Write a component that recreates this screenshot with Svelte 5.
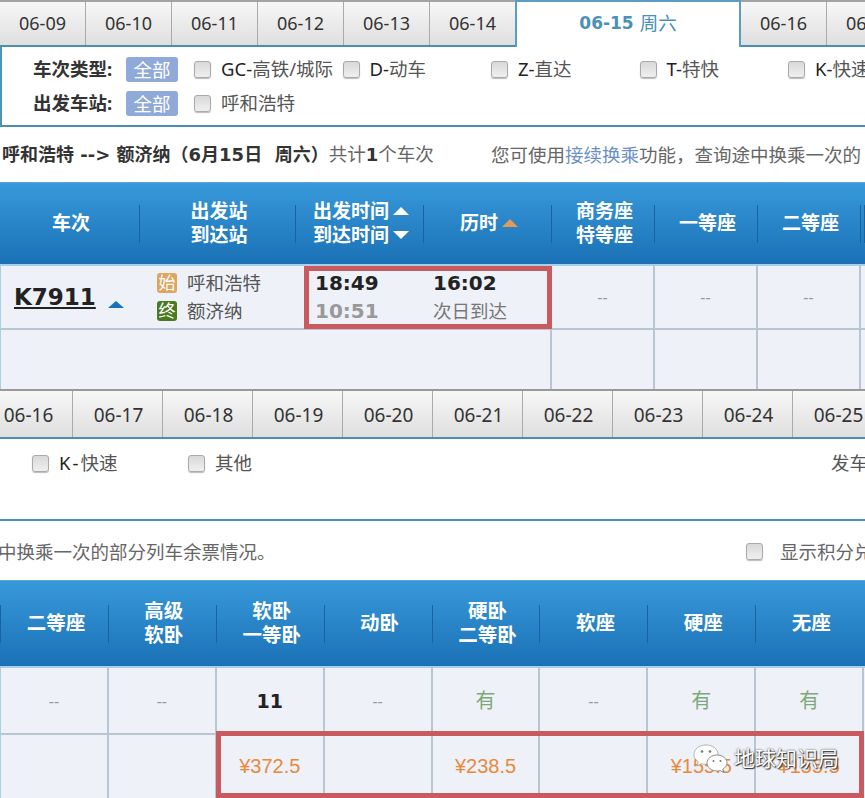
<script>
  const topDates = ["06-09", "06-10", "06-11", "06-12", "06-13", "06-14"];
  const topDatesAfter = ["06-16", "06-17"];
  const bottomDates = ["06-16", "06-17", "06-18", "06-19", "06-20", "06-21", "06-22", "06-23", "06-24", "06-25"];
  const trainTypes = [
    { code: "GC-", name: "高铁/城际" },
    { code: "D-", name: "动车" },
    { code: "Z-", name: "直达" },
    { code: "T-", name: "特快" },
    { code: "K-", name: "快速" },
  ];
  const topSeats = [["商务座", "特等座"], ["一等座"], ["二等座"]];
  const bottomSeats = [
    ["二等座"], ["高级", "软卧"], ["软卧", "一等卧"], ["动卧"],
    ["硬卧", "二等卧"], ["软座"], ["硬座"], ["无座"],
  ];
  const availability = ["--", "--", "11", "--", "有", "--", "有", "有"];
  const prices = ["", "", "¥372.5", "", "¥238.5", "", "¥155.5", "¥155.5"];
</script>

<div class="page">
  <!-- left half of the results page -->
  <section class="panel top">
    <div class="tabs">
      {#each topDates as d}
        <div class="tab">{d}</div>
      {/each}
      <div class="tab active"><b>06-15</b> 周六</div>
      {#each topDatesAfter as d}
        <div class="tab">{d}</div>
      {/each}
    </div>

    <div class="filter">
      <div class="filter-row">
        <span class="label">车次类型:</span>
        <span class="all">全部</span>
        <div class="types">
          {#each trainTypes as t}
            <span class="check"><i class="box"></i><span class="latin">{t.code}</span>{t.name}</span>
          {/each}
        </div>
      </div>
      <div class="filter-row">
        <span class="label">出发车站:</span>
        <span class="all">全部</span>
        <div class="types">
          <span class="check"><i class="box"></i>呼和浩特</span>
        </div>
      </div>
    </div>

    <div class="summary">
      <span class="route"><b>呼和浩特 --&gt; 额济纳（6月15日&nbsp; 周六）</b>共计<b>1</b>个车次</span>
      <span class="hint">您可使用<span class="link">接续换乘</span>功能，查询途中换乘一次的</span>
    </div>

    <div class="thead top-cols">
      <div class="th">车次</div>
      <div class="th">出发站<br />到达站</div>
      <div class="th">
        <div class="sorted"><span>出发时间</span><i class="tri up"></i></div>
        <div class="sorted"><span>到达时间</span><i class="tri down"></i></div>
      </div>
      <div class="th"><div class="sorted"><span>历时</span><i class="tri up orange"></i></div></div>
      {#each topSeats as s}
        <div class="th">{#each s as line, i}{#if i}<br />{/if}{line}{/each}</div>
      {/each}
      <div class="th"></div>
    </div>

    <div class="tbody top-body">
      <div class="train-info">
        <div class="train"><a href="#k7911">K7911</a><i class="tri small"></i></div>
        <div class="stations">
          <div class="station"><i class="badge start">始</i>呼和浩特</div>
          <div class="station"><i class="badge end">终</i>额济纳</div>
        </div>
        <div class="times">
          <b>18:49</b>
          <b class="arrive">10:51</b>
        </div>
        <div class="times">
          <b>16:02</b>
          <span class="next-day">次日到达</span>
        </div>
      </div>
      <div class="td dash">--</div>
      <div class="td dash">--</div>
      <div class="td dash">--</div>
      <div class="td last"></div>
      <div class="td spacer"></div>
      <div class="td"></div>
      <div class="td"></div>
      <div class="td"></div>
      <div class="td last"></div>
    </div>

    <div class="highlight time-box"></div>
  </section>

  <!-- right half, scrolled sideways -->
  <section class="panel bottom">
    <div class="tabs shifted">
      {#each bottomDates as d}
        <div class="tab wide">{d}</div>
      {/each}
    </div>

    <div class="filter plain">
      <span class="check k"><i class="box"></i><span class="latin">K-</span>快速</span>
      <span class="check other"><i class="box"></i>其他</span>
      <span class="depart">发车</span>
    </div>

    <div class="summary tail">
      <span class="tail-text">中换乘一次的部分列车余票情况。</span>
      <span class="check points"><i class="box"></i>显示积分兑换</span>
    </div>

    <div class="thead bottom-cols">
      {#each bottomSeats as s}
        <div class="th">{#each s as line, i}{#if i}<br />{/if}{line}{/each}</div>
      {/each}
    </div>

    <div class="tbody bottom-cols">
      {#each availability as a}
        <div class="td avail" class:dash={a === "--"} class:count={a === "11"} class:yes={a === "有"}>{a}</div>
      {/each}
      {#each prices as p}
        <div class="td price">{p}</div>
      {/each}
    </div>

    <div class="highlight price-box"></div>

    <div class="watermark">
      <svg viewBox="0 0 38 30" width="38" height="30" aria-hidden="true">
        <path d="M14 2C7 2 2 6.300 2 11.500c0 3 1.700 5.600 4.300 7.300L5.200 23l4.400-2.300c1.400.4 2.800.6 4.400.6 6.800 0 12-4.300 12-9.800S20.800 2 14 2z" fill="#fff" stroke="#888" stroke-width=".6" />
        <path d="M25 12c-5.500 0-10 3.500-10 8s4.500 8 10 8c1.100 0 2.200-.2 3.200-.5l3.400 1.900-.9-3.200c2.600-1.500 4.300-3.700 4.300-6.200 0-4.500-4.500-8-10-8z" fill="#fff" stroke="#777" stroke-width=".8" />
        <circle cx="10" cy="8.500" r="1.300" fill="#777" />
        <circle cx="18" cy="8.500" r="1.300" fill="#777" />
        <circle cx="21.500" cy="18" r="1" fill="#777" />
        <circle cx="28.500" cy="18" r="1" fill="#777" />
      </svg>
      <span>地球知识局</span>
    </div>
  </section>
</div>

<style>
  .page {
    width: 865px;
    height: 798px;
    overflow: hidden;
    background: #fff;
    font-family: "Noto Sans", "Noto Sans CJK SC", sans-serif;
    font-size: 18.500px;
    line-height: 24px;
    color: #555;
  }

  .panel {
    position: relative;
    overflow: hidden;
  }

  .top {
    height: 391px;
    border-bottom: 2px solid #999;
    box-sizing: border-box;
  }

  .bottom {
    height: 407px;
  }

  /* date tabs */
  .tabs {
    display: flex;
    height: 47px;
    width: 1100px;
    box-sizing: border-box;
    border-top: 2px solid #a3a3a3;
    border-bottom: 2px solid #4a8fb0;
  }

  .bottom .tabs {
    border-top: 0;
    height: 48px;
  }

  .tabs.shifted {
    margin-left: -17px;
  }

  .tab {
    flex: 0 0 86px;
    display: flex;
    align-items: center;
    justify-content: center;
    box-sizing: border-box;
    padding-bottom: 2px;
    border-right: 1px solid #aaa;
    background: linear-gradient(#f7f7f7, #dfdfdf);
    color: #333;
    font-size: 18px;
  }

  .tab.wide {
    flex-basis: 90px;
    padding: 2px 0 0 2px;
    font-size: 19px;
  }

  .tab.active {
    flex-basis: 226px;
    height: 47px;
    margin: -2px 0 0 -1px;
    padding-bottom: 4px;
    gap: 6px;
    background: #fff;
    color: #4a90b8;
    border: 2px solid #5a9cc4;
    border-bottom: 0;
    position: relative;
    z-index: 1;
    font-size: 18.500px;
  }

  .tab.active b {
    font-family: "DejaVu Sans", sans-serif;
    font-size: 17px;
  }

  /* filter box */
  .filter {
    height: 80px;
    box-sizing: border-box;
    padding: 9px 0 0 31px;
    border-left: 2px solid #4a94b4;
    border-bottom: 2px solid #4a8fb0;
    display: flex;
    flex-direction: column;
    gap: 8px;
  }

  .filter-row {
    display: flex;
    align-items: center;
    height: 26px;
  }

  .label {
    flex: none;
    width: 93px;
    font-weight: 700;
    color: #333;
    white-space: nowrap;
  }

  .all {
    flex: none;
    width: 52px;
    height: 25px;
    line-height: 25px;
    text-align: center;
    border-radius: 3px;
    background: #8fa9d8;
    color: #fff;
    margin-right: 16px;
  }

  .types {
    display: flex;
  }

  .check {
    display: inline-flex;
    align-items: center;
    white-space: nowrap;
  }

  .types .check {
    width: 148.500px;
  }

  .latin {
    color: #222;
  }

  .box {
    flex: none;
    width: 15px;
    height: 15px;
    margin-right: 10px;
    border: 1px solid #aaa;
    border-radius: 3px;
    background: linear-gradient(#d9d9d9, #efefef);
    box-shadow: 0 1px 1px #bbb;
  }

  .filter.plain {
    position: relative;
    display: block;
    border-left: 0;
    height: 82px;
    padding: 0;
  }

  .filter.plain > * {
    position: absolute;
    top: 12px;
  }

  .k {
    left: 32px;
  }

  .k .latin {
    letter-spacing: 2px;
  }

  .other {
    left: 188px;
  }

  .depart {
    left: 831px;
    white-space: nowrap;
  }

  /* summary line */
  .summary {
    height: 55px;
    display: flex;
    align-items: center;
    white-space: nowrap;
    color: #666;
  }

  .route {
    flex: none;
    width: 491px;
    padding-left: 2px;
    box-sizing: border-box;
  }

  .route b {
    font-family: "DejaVu Sans", "Noto Sans CJK SC", sans-serif;
    font-size: 18px;
    color: #333;
  }

  .link {
    color: #6c8fc8;
  }

  .summary.tail {
    height: 59px;
    padding-top: 2px;
    box-sizing: border-box;
  }

  .tail-text {
    width: 748px;
    margin-left: -2px;
    flex: none;
  }

  .points .box {
    margin-right: 17px;
  }

  /* tables */
  .thead {
    display: grid;
    height: 82px;
    align-items: center;
    box-sizing: border-box;
    color: #fff;
    font-weight: 700;
    font-size: 19px;
    background: linear-gradient(#3799da, #1b71b6);
    border-top: 1px solid #5aa8d8;
  }

  .bottom .thead {
    height: 86px;
    font-size: 19.500px;
  }

  .top-cols {
    grid-template-columns: 140px 156px 128px 128px 103px 103px 103px 4px;
  }

  .bottom-cols {
    grid-template-columns: repeat(8, 107.900px);
  }

  .th {
    height: 38px;
    display: flex;
    flex-direction: column;
    align-items: center;
    justify-content: center;
    box-sizing: border-box;
    padding: 0 0 2px 3px;
    text-align: center;
    border-right: 1px solid #1a62a0;
    line-height: 24px;
    white-space: nowrap;
  }

  .bottom .th {
    border-right: 0;
    border-left: 1px solid #1a62a0;
  }

  .sorted {
    display: flex;
    align-items: center;
    gap: 4px;
  }

  .tri {
    width: 0;
    height: 0;
    border-left: 8px solid transparent;
    border-right: 8px solid transparent;
  }

  .tri.up {
    border-bottom: 8px solid #fff;
  }

  .tri.down {
    border-top: 8px solid #fff;
  }

  .tri.orange {
    border-bottom-color: #e09a5c;
  }

  .tri.small {
    border-bottom: 7px solid #1a70c0;
    margin: 15px 0 0 12px;
  }

  .tbody {
    background: #eef1f8;
    border-top: 2px solid #a9cfe8;
    border-left: 1px solid #a9cfe8;
  }

  .top-body {
    display: grid;
    height: 126px;
    box-sizing: border-box;
    grid-template-columns: 551px 103px 103px 103px 4px;
    grid-template-rows: 64px 1fr;
  }

  .train-info {
    display: grid;
    grid-template-columns: 156px 158px 118px 119px;
    align-items: center;
    border-bottom: 2px solid #b7c6d0;
    border-right: 2px solid #b7c6d0;
  }

  .train {
    display: flex;
    align-items: center;
    padding-left: 13px;
  }

  .train a {
    font-family: "DejaVu Sans", sans-serif;
    font-size: 23px;
    font-weight: 700;
    color: #222;
  }

  .stations,
  .times {
    display: flex;
    flex-direction: column;
    gap: 4px;
  }

  .station {
    display: flex;
    align-items: center;
    gap: 10px;
  }

  .badge {
    width: 20px;
    height: 20px;
    border-radius: 3px;
    font-style: normal;
    font-size: 17px;
    line-height: 20px;
    text-align: center;
    color: #fff;
  }

  .badge.start {
    background: #dca560;
  }

  .badge.end {
    background: #4a7a20;
  }

  .times b {
    font-family: "DejaVu Sans", sans-serif;
    font-size: 20px;
    color: #222;
  }

  .times b.arrive {
    color: #999;
  }

  .next-day {
    color: #777;
  }

  .td {
    display: flex;
    align-items: center;
    justify-content: center;
    border-bottom: 2px solid #b7c6d0;
    border-right: 2px solid #b7c6d0;
  }

  .td.last {
    border-right: 0;
  }

  .td.spacer {
    border-bottom: 0;
  }

  .top-body .td:nth-child(n + 6) {
    border-bottom: 0;
  }

  .dash {
    color: #999;
    font-size: 16px;
  }

  .bottom .tbody {
    display: grid;
    grid-template-rows: 67px 65px;
    height: 132px;
    box-sizing: border-box;
  }

  .count {
    font-family: "DejaVu Sans", sans-serif;
    font-weight: 700;
    font-size: 19px;
    color: #222;
  }

  .yes {
    color: #7fa878;
    font-size: 20px;
  }

  .price {
    font-family: "Liberation Sans", sans-serif;
    font-size: 20px;
    color: #e8893c;
    border-bottom: 0;
    padding-bottom: 4px;
  }

  /* red annotation frames sit over the table */
  .highlight {
    position: absolute;
    box-sizing: border-box;
    border: 5px solid #c85a60;
  }

  .time-box {
    left: 304px;
    top: 266px;
    width: 248px;
    height: 63px;
  }

  .price-box {
    left: 216px;
    top: 340px;
    width: 648px;
    height: 67px;
  }

  .watermark {
    position: absolute;
    left: 692px;
    top: 352px;
    display: flex;
    align-items: center;
    gap: 4px;
    color: #fff;
    font-size: 21px;
    text-shadow: 0 0 2px #333, 1px 1px 1px #333;
    white-space: nowrap;
  }
</style>
